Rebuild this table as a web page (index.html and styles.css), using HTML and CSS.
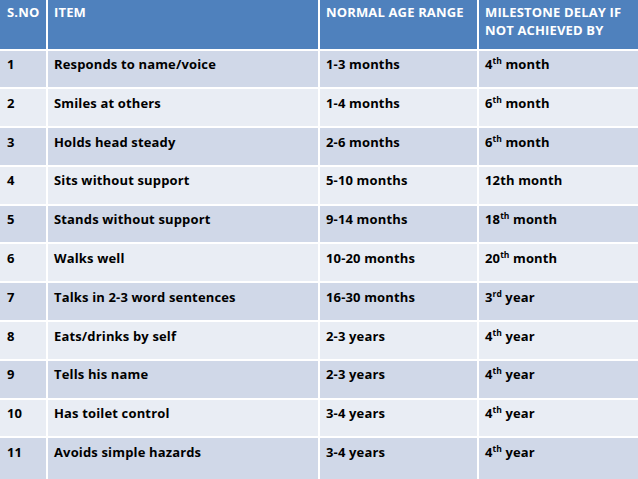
FILE: index.html
```html
<!DOCTYPE html>
<html>
<head>
<meta charset="utf-8">
<link rel="stylesheet" href="styles.css">
</head>
<body>
<div class="table">
  <div class="cell head c1">S.NO</div>
  <div class="cell head">ITEM</div>
  <div class="cell head">NORMAL AGE RANGE</div>
  <div class="cell head">MILESTONE DELAY IF NOT ACHIEVED BY</div>

  <div class="cell odd c1">1</div><div class="cell odd">Responds to name/voice</div><div class="cell odd">1-3 months</div><div class="cell odd">4<sup>th</sup> month</div>
  <div class="cell even c1">2</div><div class="cell even">Smiles at others</div><div class="cell even">1-4 months</div><div class="cell even">6<sup>th</sup> month</div>
  <div class="cell odd c1">3</div><div class="cell odd">Holds head steady</div><div class="cell odd">2-6 months</div><div class="cell odd">6<sup>th</sup> month</div>
  <div class="cell even c1">4</div><div class="cell even">Sits without support</div><div class="cell even">5-10 months</div><div class="cell even">12th month</div>
  <div class="cell odd c1">5</div><div class="cell odd">Stands without support</div><div class="cell odd">9-14 months</div><div class="cell odd">18<sup>th</sup> month</div>
  <div class="cell even c1">6</div><div class="cell even">Walks well</div><div class="cell even">10-20 months</div><div class="cell even">20<sup>th</sup> month</div>
  <div class="cell odd c1">7</div><div class="cell odd">Talks in 2-3 word sentences</div><div class="cell odd">16-30 months</div><div class="cell odd">3<sup>rd</sup> year</div>
  <div class="cell even c1">8</div><div class="cell even">Eats/drinks by self</div><div class="cell even">2-3 years</div><div class="cell even">4<sup>th</sup> year</div>
  <div class="cell odd c1">9</div><div class="cell odd">Tells his name</div><div class="cell odd">2-3 years</div><div class="cell odd">4<sup>th</sup> year</div>
  <div class="cell even c1">10</div><div class="cell even">Has toilet control</div><div class="cell even">3-4 years</div><div class="cell even">4<sup>th</sup> year</div>
  <div class="cell odd c1">11</div><div class="cell odd">Avoids simple hazards</div><div class="cell odd">3-4 years</div><div class="cell odd">4<sup>th</sup> year</div>
</div>
</body>
</html>
```
FILE: styles.css
```css
html, body {
  margin: 0;
  padding: 0;
  background: #ffffff;
}
body {
  width: 638px;
  height: 479px;
  overflow: hidden;
}
.table {
  display: grid;
  grid-template-columns: 46px 270px 157px 1fr;
  grid-template-rows: 48.5px repeat(10, 36.8px) 1fr;
  column-gap: 2px;
  row-gap: 2px;
  width: 638px;
  height: 479px;
  font-family: "Open Sans", "Liberation Sans", sans-serif;
  font-weight: 700;
  font-size: 13px;
  letter-spacing: 0.15px;
  line-height: 18px;
}
.cell {
  padding: 4.5px 4px 0 6px;
  color: #000000;
  white-space: nowrap;
  overflow: hidden;
}
.c1 {
  padding-left: 7px;
}
.head {
  background: #4f81bd;
  color: #ffffff;
  padding-top: 3.2px;
  white-space: normal;
}
.odd {
  background: #d0d8e8;
}
.even {
  background: #e9edf4;
}
sup {
  font-size: 8.5px;
  letter-spacing: 0;
  line-height: 0;
  vertical-align: 5px;
}
```
